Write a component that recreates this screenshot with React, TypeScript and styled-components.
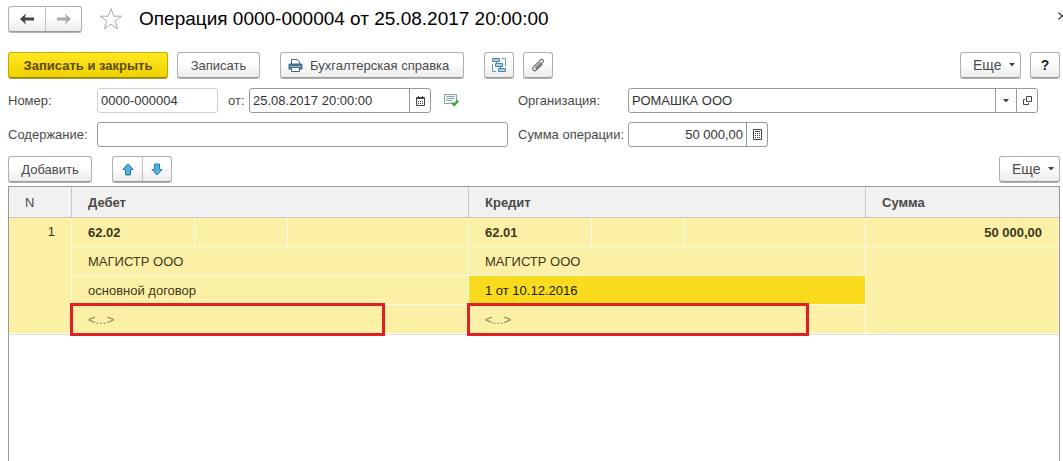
import React from "react";
import styled, { createGlobalStyle, css } from "styled-components";

const GlobalStyle = createGlobalStyle`
  * { box-sizing: border-box; }
  body {
    margin: 0;
    background: #fff;
    color: #4a4a4a;
    font-family: "Liberation Sans", Arial, sans-serif;
    font-size: 13px;
    overflow: hidden;
  }
  button, input { font: inherit; color: inherit; margin: 0; }
  svg { flex: none; }
`;

const Page = styled.main`
  display: flex;
  flex-direction: column;
  min-height: 100vh;
  padding: 6px 3px 0 8px;
`;

const TitleBar = styled.header`
  display: flex;
  align-items: center;
  height: 25px;
  margin-bottom: 21px;
`;

const raised = css`
  border: 1px solid #b0b0b0;
  border-bottom-color: #9a9a9a;
  border-radius: 3px;
  background: linear-gradient(#ffffff 40%, #ececec);
  box-shadow: 0 1px 0 #b4b4b4;
`;

const ButtonPair = styled.div<{ $cell: number }>`
  ${raised}
  display: flex;
  height: 26px;
  button {
    display: flex;
    align-items: center;
    justify-content: center;
    width: ${(p) => p.$cell}px;
    padding: 0;
    border: 0;
    background: none;
  }
  button + button { border-left: 1px solid #c0c0c0; }
`;

const BareButton = styled.button`
  display: flex;
  padding: 0;
  border: 0;
  background: none;
`;

const StarButton = styled(BareButton)`
  margin: 0 16px 0 17px;
`;

const Title = styled.h1`
  flex: 1;
  margin: 0;
  color: #000;
  font-size: 19px;
  font-weight: 400;
  line-height: 24px;
  white-space: nowrap;
`;

const CloseButton = styled(BareButton)`
  align-self: flex-start;
  margin: 6px -3px 0 0;
`;

const Toolbar = styled.div<{ $space: number }>`
  display: flex;
  height: 27px;
  margin-bottom: ${(p) => p.$space}px;
`;

const Button = styled.button<{ $primary?: boolean; $width: number; $gap?: number }>`
  ${raised}
  display: flex;
  align-items: center;
  justify-content: center;
  gap: 7px;
  height: 26px;
  width: ${(p) => p.$width}px;
  margin-right: ${(p) => p.$gap ?? 0}px;
  padding: 0;
  white-space: nowrap;
  ${(p) =>
    p.$primary &&
    css`
      border-color: #c3a800;
      border-bottom-color: #97840a;
      background: linear-gradient(#ffe924, #f0d000);
      box-shadow: 0 1px 0 #b09c30;
      color: #5a4a10;
      font-weight: 700;
    `}
`;

const PrintButton = styled(Button)`
  justify-content: flex-start;
  padding-left: 7px;
`;

const MenuButton = styled(Button)`
  justify-content: space-between;
  padding: 0 7px 0 12px;
  font-size: 14px;
`;

const HelpButton = styled(Button)`
  color: #222;
  font-size: 14px;
  font-weight: 700;
`;

const Spacer = styled.div`
  flex: 1;
`;

const FormRow = styled.div`
  display: flex;
  height: 25px;
  margin-bottom: 9px;
  padding-right: 22px;
`;

const LeftFields = styled.div`
  display: flex;
  width: 510px;
  padding-right: 10px;
`;

const Label = styled.label<{ $width: number }>`
  width: ${(p) => p.$width}px;
  line-height: 25px;
  white-space: nowrap;
`;

const DateLabel = styled(Label)`
  margin-left: 10px;
`;

const Field = styled.div<{ $width?: number; $muted?: boolean }>`
  display: flex;
  ${(p) => (p.$width ? `width: ${p.$width}px;` : "flex: 1;")}
  border: 1px solid ${(p) => (p.$muted ? "#cfcfcf" : "#999")};
  border-radius: 3px;
  background: #fff;
  color: #333;
`;

const TextInput = styled.input<{ $right?: boolean }>`
  flex: 1;
  min-width: 0;
  width: 100%;
  padding: 0 3px;
  border: 0;
  outline: 0;
  background: none;
  text-align: ${(p) => (p.$right ? "right" : "left")};
`;

const FieldButton = styled.button`
  display: flex;
  align-items: center;
  justify-content: center;
  width: 21px;
  padding: 0;
  border: 0;
  border-left: 1px solid #999;
  background: none;
`;

const TableFrame = styled.section`
  flex: 1;
  border: 1px solid #999;
  border-bottom: 0;
`;

const Table = styled.table`
  width: 100%;
  table-layout: fixed;
  border-collapse: separate;
  border-spacing: 0;
  border-bottom: 1px solid #e0e0dc;
`;

const HeadCell = styled.th<{ $plain?: boolean }>`
  height: 31px;
  padding: 0 16px;
  border-right: 1px solid #c8c8c8;
  border-bottom: 1px solid #c8c8c8;
  background: #f1f1f1;
  font-weight: ${(p) => (p.$plain ? 400 : 700)};
  text-align: left;
  &:last-child { border-right: 0; }
`;

const Cell = styled.td<{ $bold?: boolean; $right?: boolean; $active?: boolean; $faint?: boolean }>`
  position: relative;
  height: 29px;
  padding: 0 16px;
  border-right: 1px solid #fffbe0;
  border-bottom: 1px solid #fffbe0;
  background: ${(p) => (p.$active ? "#fadb1e" : "#fcf0a6")};
  color: ${(p) => (p.$active ? "#1c1800" : p.$faint ? "#8a8258" : "#3c3820")};
  font-weight: ${(p) => (p.$bold ? 700 : 400)};
  text-align: ${(p) => (p.$right ? "right" : "left")};
  vertical-align: middle;
  &[rowspan] { vertical-align: top; line-height: 28px; }
`;

const Highlight = styled.span<{ $width: number }>`
  position: absolute;
  top: -2px;
  left: -2px;
  width: ${(p) => p.$width}px;
  height: 33px;
  border: 3px solid #de2127;
  z-index: 1;
  pointer-events: none;
`;

const NavArrow = ({ back }: { back?: boolean }) => (
  <svg width="16" height="12" viewBox="0 0 16 12" fill={back ? "#444" : "#aaa"}>
    {back ? (
      <path d="M1 6 7 .5 6 4.5H15V7.5H6L7 11.5Z" />
    ) : (
      <path d="M15 6 9 .5 10 4.5H1V7.5H10L9 11.5Z" />
    )}
  </svg>
);

const Star = () => (
  <svg width="24" height="24" viewBox="0 0 24 24" fill="#fff" stroke="#aaa">
    <path d="M12 1.5 14.7 9.2H22.7L16.3 14L18.7 21.9L12 17.2L5.3 21.9L7.7 14L1.3 9.2H9.3Z" />
  </svg>
);

const Cross = () => (
  <svg width="5" height="8" viewBox="0 0 5 8" fill="none" stroke="#444" strokeWidth="1.3">
    <path d="M.5.5 4 4 .5 7.5M5 3 4 4 5 5" />
  </svg>
);

const Printer = () => (
  <svg width="15" height="15" viewBox="0 0 15 15">
    <path d="M3.5 6V1.5H9L11.5 4V6" fill="#fff" stroke="#47637a" />
    <path d="M1.5 5.5H13.5L14.5 6.5V11.5H.5V6.5Z" fill="#47708f" />
    <path d="M2 8.5H13" stroke="#9ec0d6" />
    <path d="M3.5 9.5H11.5V13.5H3.5Z" fill="#fff" stroke="#47637a" />
  </svg>
);

const Structure = () => (
  <svg width="16" height="16" viewBox="0 0 16 16" fill="none" stroke="#4f83a6">
    <path d="M10.5 1.5H14.5V9M1.5 7V14.5H5" stroke="#6f98b4" />
    <path d="M1.5 1.5H8.5V4.5H1.5ZM4.5 6.5H11.5V9.5H4.5ZM7.5 11.5H14.5V14.5H7.5Z" fill="#a9d0e8" />
    <path d="M5.5 4.5V6.5M9.5 9.5V11.5" />
  </svg>
);

const Clip = () => (
  <svg width="14" height="14" viewBox="0 0 14 14" fill="none" stroke="#666" strokeWidth="1.1">
    <path d="M9.8 4.2 5 9.1C4.2 9.9 5.3 11 6.1 10.2L11.6 4.7C13.6 2.5 11.3.3 9.2 2.2L2.6 8.8C.2 11.4 3 14.2 5.5 11.8L11.3 6" />
  </svg>
);

const Caret = () => (
  <svg width="6" height="4" viewBox="0 0 6 4" fill="#444">
    <path d="M0 0H6L3.5 3H2.5Z" />
  </svg>
);

const Calendar = () => (
  <svg width="9" height="10" viewBox="0 0 9 10" fill="none" stroke="#444">
    <path d="M.5 1.5H8.5V9.5H.5ZM0 2.5H9M2.5 0V2M6.5 0V2" />
    <path d="M2 5.5H7.5M2 7.5H7.5" strokeDasharray="1 1" />
  </svg>
);

const Calculator = () => (
  <svg width="9" height="11" viewBox="0 0 9 11" fill="none" stroke="#444">
    <path d="M.5.5H8.5V10.5H.5ZM2 2.5H7" />
    <path d="M2 4.5H7.5M2 6.5H7.5M2 8.5H7.5" strokeDasharray="1 1" />
  </svg>
);

const OpenIcon = () => (
  <svg width="9" height="9" viewBox="0 0 9 9" fill="none" stroke="#444">
    <path d="M3.5.5H8.5V5.5H3.5ZM2 3.5H.5V8.5H5.5V7" />
  </svg>
);

const Posted = () => (
  <svg width="15" height="13" viewBox="0 0 15 13" fill="none">
    <path d="M.5.5H12.5V9.5H.5Z" fill="#f4f8f8" stroke="#87a0a8" />
    <path d="M2.5 2.5H10.5M2.5 4.5H10.5M2.5 6.5H8" stroke="#87a0a8" />
    <path d="M8 8.5 10.3 11 14 6.5" stroke="#3da648" strokeWidth="2.4" />
  </svg>
);

const MoveArrow = ({ down }: { down?: boolean }) => (
  <svg width="12" height="13" viewBox="0 0 12 13" fill="#4fb0e0" stroke="#2b7da8">
    {down ? (
      <path d="M6 12 .9 6.5H3.5V1H8.5V6.5H11.1Z" />
    ) : (
      <path d="M6 1 11.1 6.5H8.5V12H3.5V6.5H.9Z" />
    )}
  </svg>
);

const PostedMark = styled.span`
  display: flex;
  align-items: center;
  margin-left: 13px;
`;

const MoreButton = ({ gap }: { gap?: number }) => (
  <MenuButton type="button" $width={61} $gap={gap}>
    Еще <Caret />
  </MenuButton>
);

export default function App() {
  return (
    <Page>
      <GlobalStyle />
      <TitleBar>
        <ButtonPair $cell={36}>
          <button type="button" aria-label="Назад"><NavArrow back /></button>
          <button type="button" aria-label="Вперед"><NavArrow /></button>
        </ButtonPair>
        <StarButton type="button" aria-label="В избранное"><Star /></StarButton>
        <Title>Операция 0000-000004 от 25.08.2017 20:00:00</Title>
        <CloseButton type="button" aria-label="Закрыть"><Cross /></CloseButton>
      </TitleBar>

      <Toolbar $space={9}>
        <Button type="button" $primary $width={160} $gap={9}>Записать и закрыть</Button>
        <Button type="button" $width={83} $gap={20}>Записать</Button>
        <PrintButton type="button" $width={184} $gap={20}><Printer />Бухгалтерская справка</PrintButton>
        <Button type="button" $width={30} $gap={9} aria-label="Структура подчиненности"><Structure /></Button>
        <Button type="button" $width={30} aria-label="Файлы"><Clip /></Button>
        <Spacer />
        <MoreButton gap={9} />
        <HelpButton type="button" $width={30}>?</HelpButton>
      </Toolbar>

      <FormRow>
        <LeftFields>
          <Label htmlFor="number" $width={89}>Номер:</Label>
          <Field $width={121} $muted><TextInput id="number" defaultValue="0000-000004" /></Field>
          <DateLabel htmlFor="date" $width={21}>от:</DateLabel>
          <Field $width={182}>
            <TextInput id="date" defaultValue="25.08.2017 20:00:00" />
            <FieldButton type="button" aria-label="Календарь"><Calendar /></FieldButton>
          </Field>
          <PostedMark><Posted /></PostedMark>
        </LeftFields>
        <Label htmlFor="organization" $width={110}>Организация:</Label>
        <Field>
          <TextInput id="organization" defaultValue="РОМАШКА ООО" />
          <FieldButton type="button" aria-label="Выбрать"><Caret /></FieldButton>
          <FieldButton type="button" aria-label="Открыть"><OpenIcon /></FieldButton>
        </Field>
      </FormRow>

      <FormRow>
        <LeftFields>
          <Label htmlFor="content" $width={89}>Содержание:</Label>
          <Field><TextInput id="content" /></Field>
        </LeftFields>
        <Label htmlFor="amount" $width={110}>Сумма операции:</Label>
        <Field $width={140}>
          <TextInput id="amount" $right defaultValue="50 000,00" />
          <FieldButton type="button" aria-label="Калькулятор"><Calculator /></FieldButton>
        </Field>
      </FormRow>

      <Toolbar $space={3}>
        <Button type="button" $width={84} $gap={20}>Добавить</Button>
        <ButtonPair $cell={29}>
          <button type="button" aria-label="Переместить вверх"><MoveArrow /></button>
          <button type="button" aria-label="Переместить вниз"><MoveArrow down /></button>
        </ButtonPair>
        <Spacer />
        <MoreButton />
      </Toolbar>

      <TableFrame>
        <Table>
          <colgroup>
            <col width="63" />
            <col width="123" />
            <col width="93" />
            <col />
            <col width="123" />
            <col width="93" />
            <col />
            <col width="193" />
          </colgroup>
          <thead>
            <tr>
              <HeadCell $plain>N</HeadCell>
              <HeadCell colSpan={3}>Дебет</HeadCell>
              <HeadCell colSpan={3}>Кредит</HeadCell>
              <HeadCell>Сумма</HeadCell>
            </tr>
          </thead>
          <tbody>
            <tr>
              <Cell rowSpan={4} $right>1</Cell>
              <Cell $bold>62.02</Cell>
              <Cell />
              <Cell />
              <Cell $bold>62.01</Cell>
              <Cell />
              <Cell />
              <Cell $bold $right>50 000,00</Cell>
            </tr>
            <tr>
              <Cell colSpan={3}>МАГИСТР ООО</Cell>
              <Cell colSpan={3}>МАГИСТР ООО</Cell>
              <Cell rowSpan={3} />
            </tr>
            <tr>
              <Cell colSpan={3}>основной договор</Cell>
              <Cell colSpan={3} $active>1 от 10.12.2016</Cell>
            </tr>
            <tr>
              <Cell colSpan={3} $faint>&lt;...&gt;<Highlight $width={315} /></Cell>
              <Cell colSpan={3} $faint>&lt;...&gt;<Highlight $width={342} /></Cell>
            </tr>
          </tbody>
        </Table>
      </TableFrame>
    </Page>
  );
}
